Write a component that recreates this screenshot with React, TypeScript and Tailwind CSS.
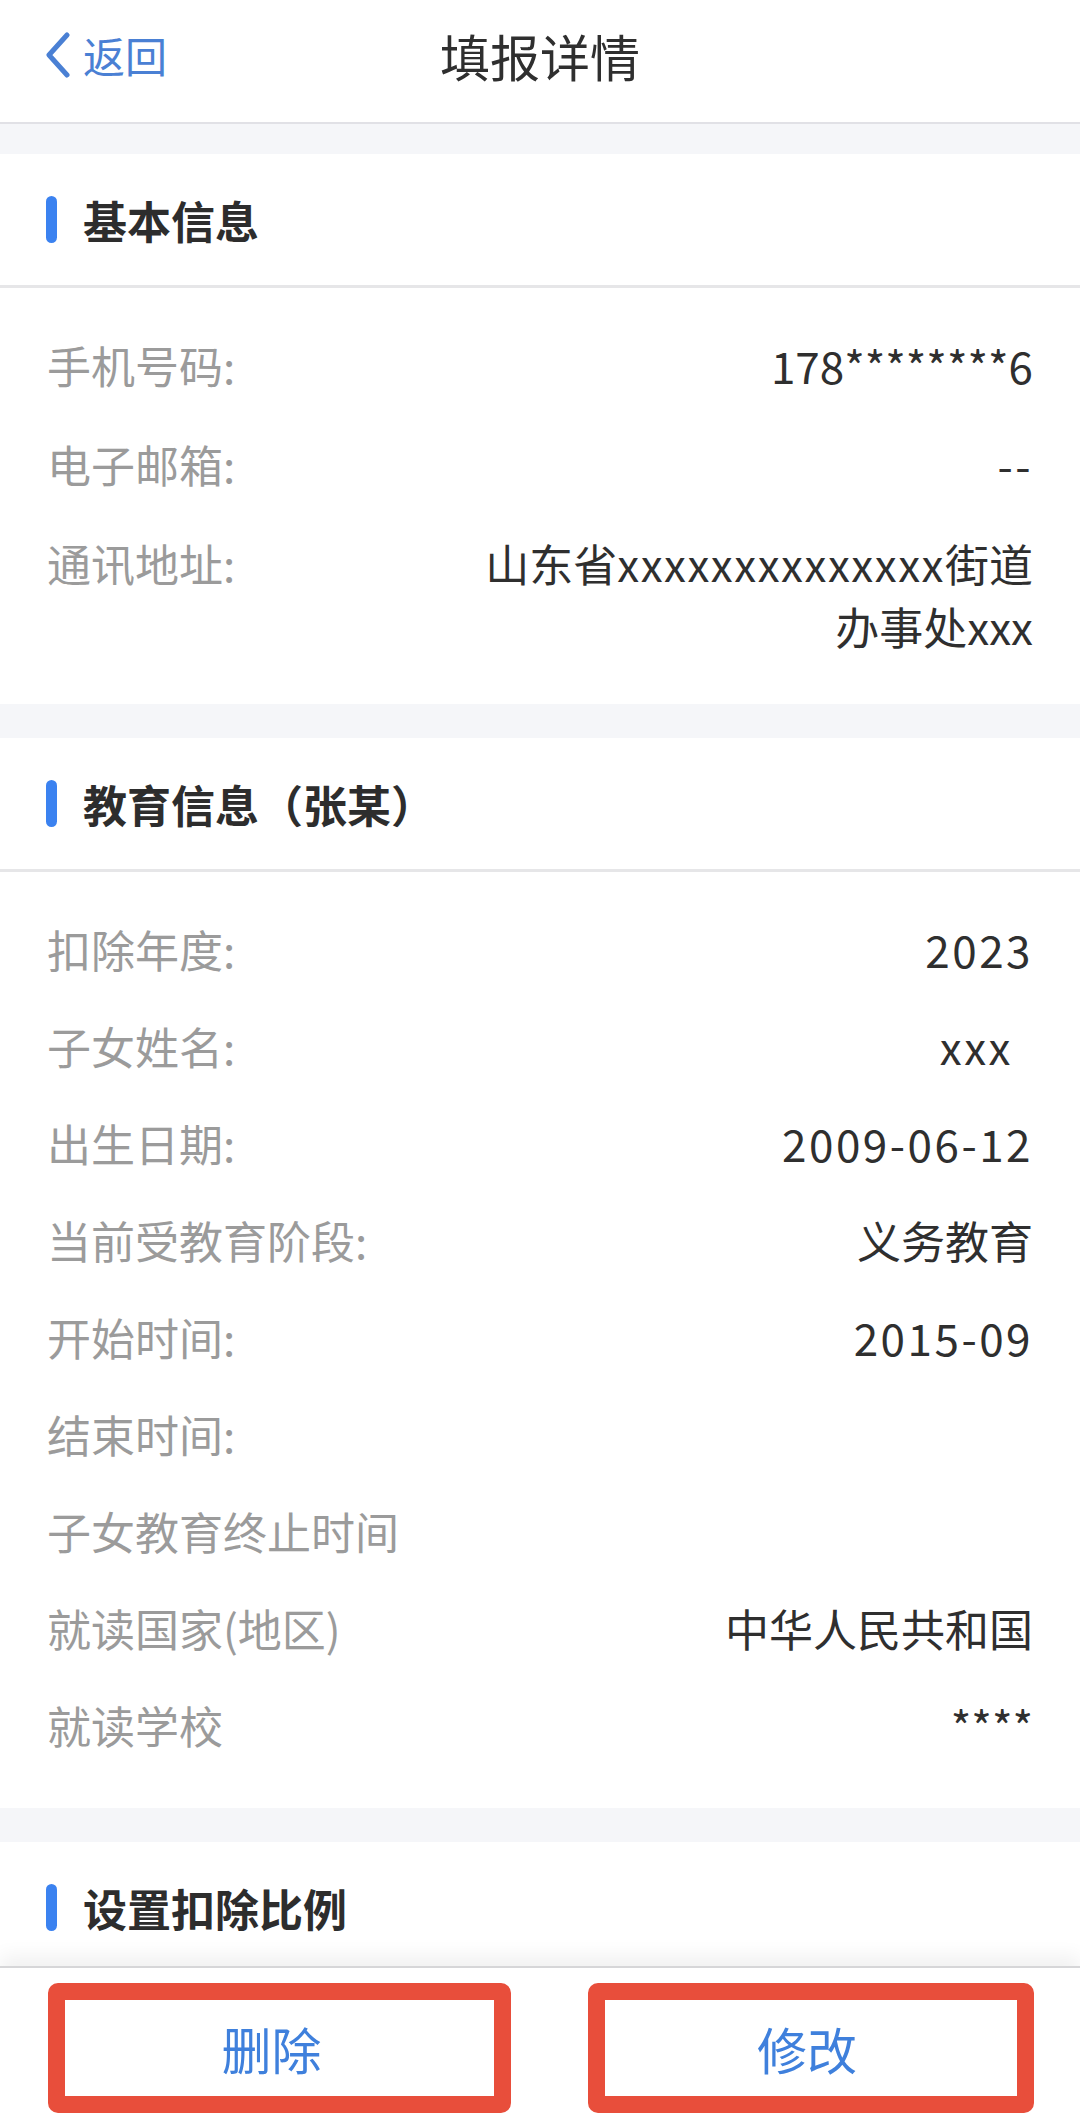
import React from 'react';

type Row = { label: string; value?: React.ReactNode; pad?: boolean; num?: boolean };

const basicRows: Row[] = [
  { label: '手机号码:', value: '178********6' },
  { label: '电子邮箱:', value: '--', num: true },
];

const eduRows: Row[] = [
  { label: '扣除年度:', value: '2023', num: true },
  { label: '子女姓名:', value: 'xxx', pad: true, num: true },
  { label: '出生日期:', value: '2009-06-12', num: true },
  { label: '当前受教育阶段:', value: '义务教育' },
  { label: '开始时间:', value: '2015-09', num: true },
  { label: '结束时间:' },
  { label: '子女教育终止时间' },
  { label: '就读国家(地区)', value: '中华人民共和国' },
  { label: '就读学校', value: '****' },
];

function SectionHead({ title, line = true }: { title: string; line?: boolean }) {
  return (
    <div
      className={
        'flex h-[131px] shrink-0 items-center pl-[46px] ' +
        (line ? 'box-content border-b-[3px] border-[#e6e6e8]' : '')
      }
    >
      <span className="h-[47px] w-[11px] rounded-full bg-[#3b82f0]" />
      <span className="ml-[26px] text-[44px] font-bold leading-none text-[#2d2d2d]">{title}</span>
    </div>
  );
}

function InfoRow({ row, tight }: { row: Row; tight?: boolean }) {
  return (
    <div
      className={
        'flex items-start justify-between text-[44px] ' +
        (tight ? 'py-[17px] leading-[63px]' : 'py-[18px] leading-[63px]')
      }
    >
      <span className="shrink-0 text-[#9b9b9b]">{row.label}</span>
      <span
        className={
          'text-right text-[#2f2f2f] ' +
          (row.num ? 'tracking-[2.5px] ' : '') +
          (row.pad ? 'pr-[20px]' : '')
        }
      >
        {row.value}
      </span>
    </div>
  );
}

export default function App() {
  return (
    <div className="flex h-[2115px] w-[1080px] flex-col overflow-hidden bg-[#f5f6f9] font-['Noto_Sans_CJK_SC','Noto_Sans',sans-serif]">
      {/* top nav */}
      <header className="h-[124px] shrink-0 border-b-2 border-[#e1e1e6] bg-white">
        <div className="grid h-[110px] grid-cols-[1fr_auto_1fr] items-center px-[45px]">
          <div className="flex items-center text-[#4a80d4]">
            <svg width="26" height="46" viewBox="0 0 26 46" fill="none">
              <path d="M22 3 L4 23 L22 43" stroke="currentColor" strokeWidth="5" strokeLinecap="round" strokeLinejoin="round" />
            </svg>
            <span className="ml-[12px] text-[42px] leading-none">返回</span>
          </div>
          <h1 className="text-[50px] font-normal leading-none text-[#2f2f2f]">填报详情</h1>
          <div />
        </div>
      </header>

      <main className="flex min-h-0 flex-1 flex-col gap-[34px] overflow-hidden pt-[30px]">
        <section className="shrink-0 bg-white">
          <SectionHead title="基本信息" />
          <div className="px-[47px] pb-[28px] pt-[28px]">
            {basicRows.map((r) => (
              <InfoRow key={r.label} row={r} />
            ))}
            <div className="flex items-start justify-between py-[18px] text-[44px] leading-[63px]">
              <span className="shrink-0 text-[#9b9b9b]">通讯地址:</span>
              <span className="text-right text-[#2f2f2f]">
                山东省<span className="tracking-[1.5px]">xxxxxxxxxxxxxx</span>街道
                <br />
                办事处xxx
              </span>
            </div>
          </div>
        </section>

        <section className="shrink-0 bg-white">
          <SectionHead title="教育信息（张某）" />
          <div className="px-[47px] pb-[34px] pt-[29px]">
            {eduRows.map((r) => (
              <InfoRow key={r.label} row={r} tight />
            ))}
          </div>
        </section>

        <section className="shrink-0 bg-white">
          <SectionHead title="设置扣除比例" line={false} />
        </section>
      </main>

      {/* bottom actions */}
      <footer className="relative h-[149px] shrink-0 border-t-2 border-[#d6d6d8] bg-white shadow-[0_-10px_18px_rgba(0,0,0,0.06)]">
        <div className="flex pl-[48px] pt-[15px]">
          <button className="flex h-[130px] w-[463px] items-center justify-center rounded-[10px] border-[17px] border-[#e84e3b] bg-white pr-[16px] text-[50px] leading-none text-[#3f80dc]">
            删除
          </button>
          <button className="ml-[77px] flex h-[130px] w-[446px] items-center justify-center rounded-[10px] border-[17px] border-[#e84e3b] bg-white pr-[8px] text-[50px] leading-none text-[#3f80dc]">
            修改
          </button>
        </div>
      </footer>
    </div>
  );
}
